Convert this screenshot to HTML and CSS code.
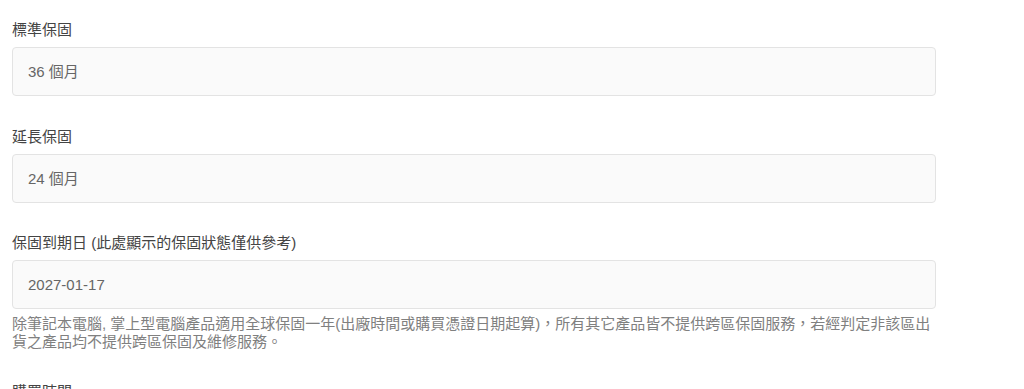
FILE: index.html
```html
<!DOCTYPE html>
<html lang="zh-Hant">
<head>
  <meta charset="UTF-8">
  <meta name="viewport" content="width=device-width, initial-scale=1.0">
  <title>保固資訊</title>
  <link rel="stylesheet" href="styles.css">
</head>
<body>
  <main class="container">
    <div class="form-group">
      <label>標準保固</label>
      <div class="form-control">36 個月</div>
    </div>

    <div class="form-group">
      <label>延長保固</label>
      <div class="form-control">24 個月</div>
    </div>

    <div class="form-group">
      <label>保固到期日 (此處顯示的保固狀態僅供參考)</label>
      <div class="form-control">2027-01-17</div>
      <p class="help-block">除筆記本電腦, 掌上型電腦產品適用全球保固一年(出廠時間或購買憑證日期起算)，所有其它產品皆不提供跨區保固服務，若經判定非該區出貨之產品均不提供跨區保固及維修服務。</p>
    </div>

    <div class="form-group">
      <label>購買時間</label>
      <div class="form-control">2024-01-17</div>
    </div>
  </main>
</body>
</html>
```

FILE: styles.css
```css
* {
  margin: 0;
  padding: 0;
  box-sizing: border-box;
}

body {
  background-color: #fff;
  color: #444;
  font-family: 'Liberation Sans', 'Noto Sans CJK TC', sans-serif;
  font-size: 15px;
  line-height: 20px;
}

.container {
  width: 948px;
  padding: 20px 12px 0;
}

.form-group {
  margin-bottom: 30.5px;
}

label {
  display: block;
  margin-bottom: 7px;
}

.form-control {
  height: 49px;
  padding: 14px 15px;
  background-color: #fafafa;
  border: 1px solid #e3e3e3;
  border-radius: 4px;
  color: #666;
}

.help-block {
  margin-top: 6px;
  color: #808080;
  line-height: 18px;
}
```
